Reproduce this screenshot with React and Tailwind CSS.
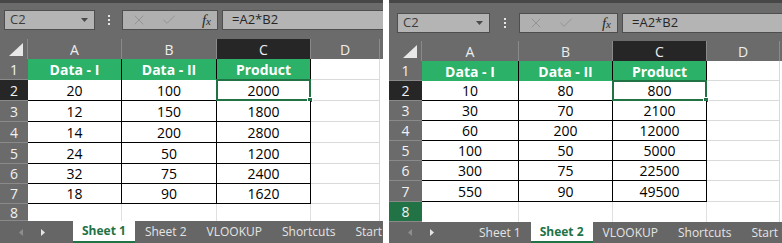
import React from "react";
import { X, Check } from "lucide-react";

// two Excel sheet captures shown side by side
const sheets = [
  {
    width: 383,
    topH: 39,
    boxPad: 7,
    nameLeft: 4,
    nameW: 91,
    dotsW: 27,
    fnW: 96,
    cols: [28, 94, 95, 94, 69],
    rowH: [21, 21, 21, 21, 21, 20, 20, 17],
    tabH: 22,
    arrowsW: 73,
    activeTab: 0,
    greenRow8: false,
    data: [
      [20, 100, 2000],
      [12, 150, 1800],
      [14, 200, 2800],
      [24, 50, 1200],
      [32, 75, 2400],
      [18, 90, 1620],
    ],
  },
  {
    width: 393,
    topH: 41,
    boxPad: 10,
    nameLeft: 8,
    nameW: 93,
    dotsW: 29,
    fnW: 99,
    cols: [33, 97, 94, 94, 73],
    rowH: [20, 20, 20, 20, 20, 20, 21, 20],
    tabH: 21,
    arrowsW: 80,
    activeTab: 1,
    greenRow8: true,
    data: [
      [10, 80, 800],
      [30, 70, 2100],
      [60, 200, 12000],
      [100, 50, 5000],
      [300, 75, 22500],
      [550, 90, 49500],
    ],
  },
];

const tabs = ["Sheet 1", "Sheet 2", "VLOOKUP", "Shortcuts", "Start here"];

const FormulaBar = ({ s }) => (
  <div
    className="flex items-start bg-[#6b6b6b] border-t-[3px] border-[#474747]"
    style={{ height: s.topH, paddingTop: s.boxPad }}
  >
    <div
      className="h-[20px] flex items-center justify-between bg-[#b4b4b4] border border-[#4e4e4e] pl-[5px] pr-[6px] text-[13px] text-[#3c3c3c]"
      style={{ marginLeft: s.nameLeft, width: s.nameW }}
    >
      <span>C2</span>
      <svg width="7" height="4" viewBox="0 0 7 4">
        <polygon points="0,0 7,0 3.5,4" fill="#4a4a4a" />
      </svg>
    </div>
    <div className="h-[20px] flex flex-col items-center justify-center gap-[2px]" style={{ width: s.dotsW }}>
      <span className="w-[2px] h-[2px] bg-[#e6e6e6]" />
      <span className="w-[2px] h-[2px] bg-[#e6e6e6]" />
      <span className="w-[2px] h-[2px] bg-[#e6e6e6]" />
    </div>
    <div
      className="h-[20px] flex items-center bg-[#b0b0b0] border border-[#4e4e4e] pl-[8px] pr-[6px]"
      style={{ width: s.fnW }}
    >
      <X size={16} strokeWidth={1.2} color="#8c8c8c" />
      <Check size={16} strokeWidth={1.2} color="#8c8c8c" className="ml-[14px]" />
      <span className="ml-auto italic font-['Liberation_Serif',serif] text-[15px] text-[#2a2a2a] leading-none">
        f<span className="text-[11px]">x</span>
      </span>
    </div>
    <div className="ml-[4px] h-[20px] flex-1 flex items-center bg-[#b4b4b4] border-y border-l border-[#4e4e4e] pl-[9px] text-[13px] text-[#262626]">
      =A2*B2
    </div>
  </div>
);

const ColHeaders = ({ s }) => (
  <div className="flex h-[20px] bg-[#6b6b6b] text-[14px] text-[#eeeeee]">
    <div className="relative border-r border-[#8a8a8a]" style={{ width: s.cols[0] }}>
      <svg className="absolute right-[4px] bottom-[3px]" width="14" height="13" viewBox="0 0 14 13">
        <polygon points="0,13 14,13 14,0" fill="#e8e8e8" />
      </svg>
    </div>
    {["A", "B", "C", "D"].map((l, i) => (
      <div
        key={l}
        className={`flex items-center justify-center border-r border-[#8a8a8a] ${l === "C" ? "bg-[#262626]" : ""}`}
        style={{ width: s.cols[i + 1] }}
      >
        {l}
      </div>
    ))}
    <div className="flex-1" />
  </div>
);

const Row = ({ s, r, h }) => {
  const values = r === 1 ? ["Data - I", "Data - II", "Product"] : r <= 7 ? s.data[r - 2] : ["", "", ""];
  let headBg = "bg-[#6b6b6b]";
  if (r === 2) headBg = "bg-[#262626]";
  if (r === 8 && s.greenRow8) headBg = "bg-[#217346]";
  return (
    <div className="flex" style={{ height: h }}>
      <div
        className={`flex items-center justify-center border-b border-[#8a8a8a] text-[14px] text-[#f2f2f2] ${headBg}`}
        style={{ width: s.cols[0] }}
      >
        {r}
      </div>
      {values.map((v, i) => {
        let cls = "border-r border-b border-black bg-white text-black";
        if (r === 1) cls = "border-r border-black bg-[#2bb168] text-white font-bold";
        if (r === 8) cls = "border-r border-[#e0e0e0] bg-white";
        return (
          <div
            key={i}
            className={`relative flex items-center justify-center text-[14px] ${cls}`}
            style={{ width: s.cols[i + 1] }}
          >
            {v}
            {r === 2 && i === 2 && (
              <div className="absolute -left-px -top-px -right-px -bottom-px border-2 border-[#217346]">
                <span className="absolute -right-[4px] -bottom-[4px] w-[6px] h-[6px] bg-[#217346] border border-white" />
              </div>
            )}
          </div>
        );
      })}
      <div
        className={`bg-white border-r border-[#dadada] ${r === 8 ? "" : "border-b"}`}
        style={{ width: s.cols[4] }}
      />
      <div className="flex-1 bg-white" />
    </div>
  );
};

const TabBar = ({ s }) => {
  const items = [];
  tabs.forEach((t, i) => {
    const active = i === s.activeTab;
    if (!active && i - 1 !== s.activeTab) {
      items.push(<span key={`sep${i}`} className="self-center w-px h-[14px] bg-[#a6a6a6]" />);
    }
    items.push(
      active ? (
        <div
          key={t}
          className="flex items-center px-[9px] bg-white border-b-2 border-[#217346] font-bold text-[#217346]"
        >
          {t}
        </div>
      ) : (
        <div key={t} className="flex items-center px-[10px] text-[#e4e4e4]">
          {t}
        </div>
      )
    );
  });
  return (
    <div
      className="flex items-stretch bg-[#666666] text-[12px] whitespace-nowrap"
      style={{ height: s.tabH }}
    >
      <div className="flex items-center gap-[18px] pl-[19px] shrink-0" style={{ width: s.arrowsW }}>
        <svg width="4" height="7" viewBox="0 0 4 7">
          <polygon points="4,0 4,7 0,3.5" fill="#8e8e8e" />
        </svg>
        <svg width="4" height="7" viewBox="0 0 4 7">
          <polygon points="0,0 0,7 4,3.5" fill="#e6e6e6" />
        </svg>
      </div>
      {items}
    </div>
  );
};

const Sheet = ({ s }) => (
  <div className="flex flex-col overflow-hidden h-[243px] shrink-0" style={{ width: s.width }}>
    <FormulaBar s={s} />
    <ColHeaders s={s} />
    {s.rowH.map((h, i) => (
      <Row key={i} s={s} r={i + 1} h={h} />
    ))}
    <TabBar s={s} />
  </div>
);

export default function App() {
  return (
    <div className="w-[782px] h-[243px] flex gap-[6px] bg-white overflow-hidden font-['Open_Sans',sans-serif]">
      {sheets.map((s, i) => (
        <Sheet key={i} s={s} />
      ))}
    </div>
  );
}
